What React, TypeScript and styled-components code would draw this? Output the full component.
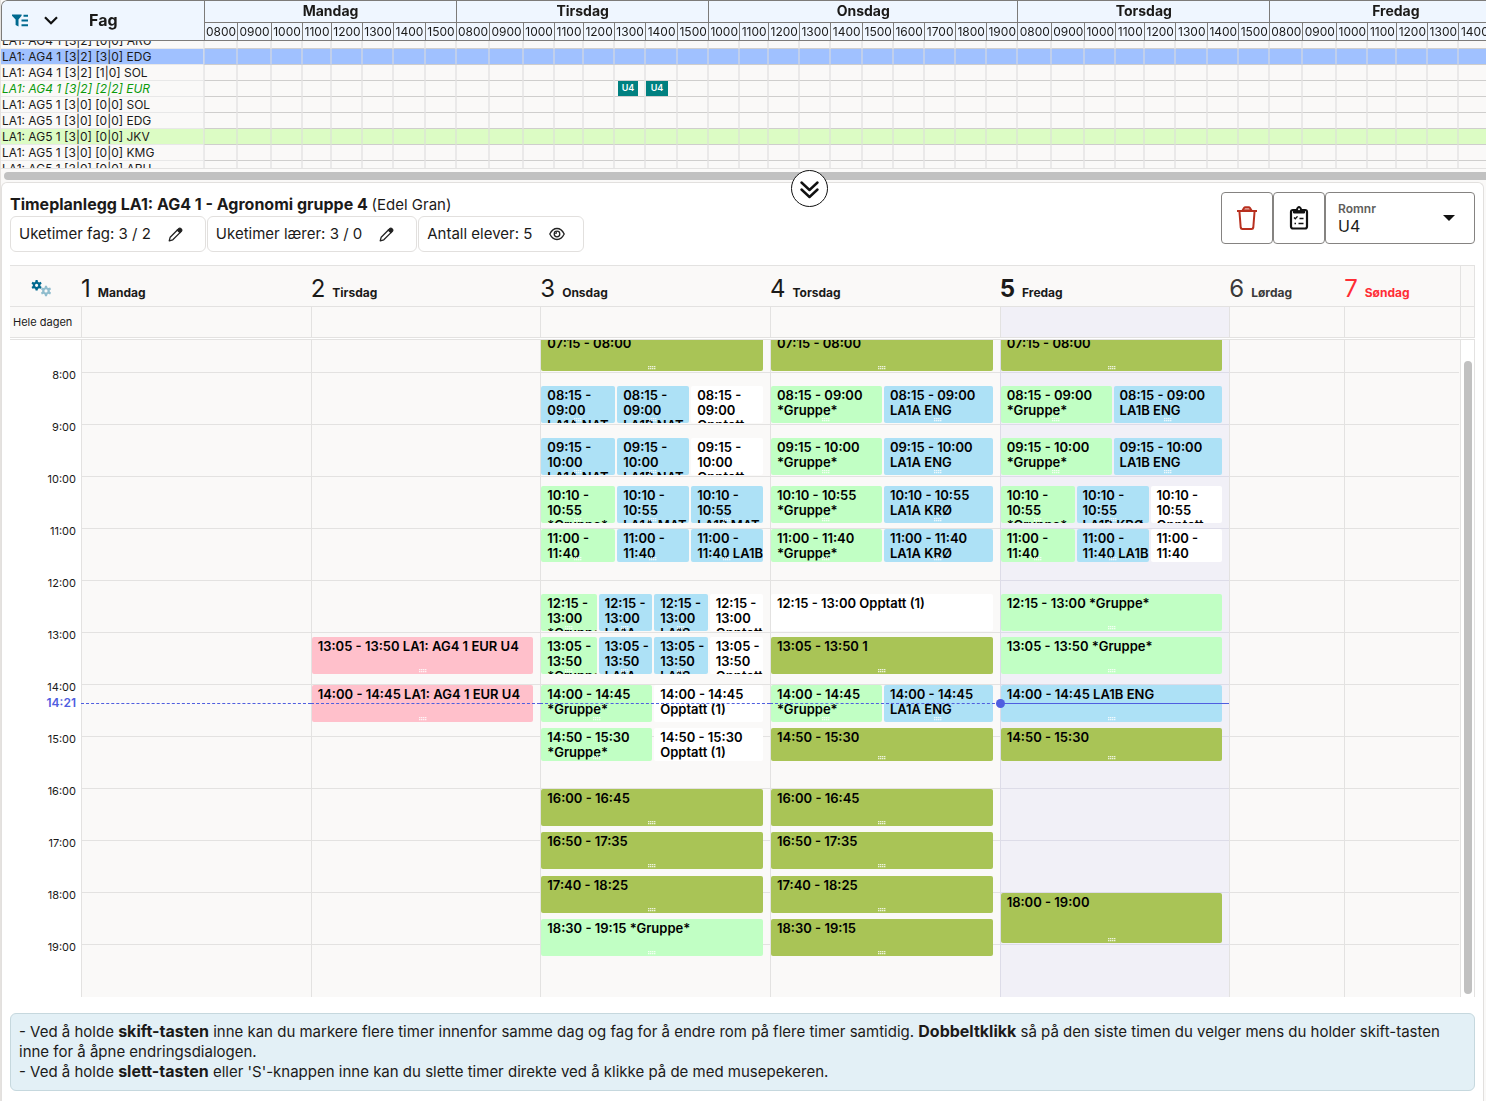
import React, { useLayoutEffect, useRef } from "react";
import styled, { createGlobalStyle, css } from "styled-components";

const GlobalStyle = createGlobalStyle`
  *, *::before, *::after { box-sizing: border-box; }
  html, body { height: 100%; }
  body {
    margin: 0;
    background: #faf9f8;
    color: #1b1a19;
    font-family: Inter, "Liberation Sans", sans-serif;
    font-size: 15px;
    line-height: 20px;
    overflow: hidden;
  }
  #root { min-height: 100%; display: flex; }
  button, select { font: inherit; color: inherit; }
`;

const line = "#e3e2e1";
const headLine = "#7d7b79";

const Page = styled.main`
  flex: 1;
  min-width: 0;
  display: flex;
  flex-direction: column;
  border-left: 1px solid #e5e2df;
`;

/* ---------- Overview table ---------- */

const OverviewScroller = styled.div`
  height: 169px;
  overflow: auto;
  scrollbar-width: none;
  border-bottom: 1px solid ${line};
  border-top-left-radius: 6px;
`;

const OverviewTable = styled.table`
  table-layout: fixed;
  width: 0;
  min-width: 100%;
  border-collapse: separate;
  border-spacing: 0;
  font-size: 12px;
  line-height: 15px;

  thead {
    position: sticky;
    top: 0;
    z-index: 1;
  }
`;

const SubjectHead = styled.th`
  height: 41px;
  padding: 0 10px;
  background: #eff6ff;
  border: 1px solid ${headLine};
  border-right: 0;
  border-top-left-radius: 6px;
  font-size: 16px;
`;

const SubjectHeadRow = styled.div`
  display: flex;
  align-items: center;
  gap: 16px;
  text-align: left;
`;

const SubjectTitle = styled.span`
  margin-left: 15px;
`;

const DayHead = styled.th`
  height: 22px;
  padding: 0;
  background: #eff6ff;
  border-top: 1px solid ${headLine};
  border-left: 1px solid ${headLine};
  font-size: 14px;
  line-height: 19px;
  vertical-align: top;
`;

const HourHead = styled.th`
  height: 19px;
  padding: 0;
  background: #eff6ff;
  border: 1px solid ${headLine};
  border-right: 0;
  font-weight: 400;
  line-height: 17px;
`;

type Tone = "plain" | "selected" | "marked" | "own";

const toneBackground: Record<Tone, string> = {
  plain: "#faf9f8",
  own: "#faf9f8",
  selected: "#a0c1ff",
  marked: "#dcfcc4",
};

const SubjectRow = styled.tr<{ $tone: Tone }>`
  background: ${(p) => toneBackground[p.$tone]};
  ${(p) =>
    p.$tone === "own" &&
    css`
      color: #0b9a0b;
      font-style: italic;
    `}
`;

const SubjectCell = styled.th`
  height: 16px;
  padding: 0 0 0 1px;
  border-right: 1px solid #e4e4e4aa;
  border-bottom: 1px solid #e8e8e8;
  font-weight: 400;
  text-align: left;
  white-space: nowrap;
`;

const SlotCell = styled.td`
  height: 16px;
  padding: 0;
  border: 0 solid #dcdcdc88;
  border-width: 0 1px 1px;
  border-bottom-color: #cfcecd;
`;

const Booking = styled.span<{ $width: number; $inset: number }>`
  display: block;
  width: ${(p) => p.$width}px;
  height: 15px;
  margin-left: ${(p) => p.$inset}px;
  background: #008080;
  color: #fff;
  font-size: 9px;
  font-style: normal;
  font-weight: 600;
  line-height: 14px;
  text-align: center;
`;

const ScrollTrack = styled.div`
  padding: 3px 0 2px 3px;
`;

const ScrollThumb = styled.div`
  height: 8px;
  border-radius: 4px 0 0 4px;
  background: #c1c1c1;
`;

/* ---------- Planner panel ---------- */

const Panel = styled.section`
  position: relative;
  flex: 1;
  margin: 0 2px 0 0;
  padding: 9px 8px 10px;
  background: #fff;
  border: 1px solid #e2e0de;
  border-bottom: 0;
  border-radius: 6px 6px 0 0;
`;

const CollapseButton = styled.button`
  position: absolute;
  top: -13px;
  left: calc(50% + 48px);
  width: 37px;
  height: 37px;
  display: grid;
  place-items: center;
  padding: 0;
  border: 1px solid #111;
  border-radius: 50%;
  background: #fff;
`;

const PanelTop = styled.header`
  display: flex;
  justify-content: space-between;
  align-items: flex-start;
`;

const Title = styled.h1`
  margin: 2px 0 1px;
  font-size: 16px;
  line-height: 21px;

  span {
    font-size: 15px;
    font-weight: 400;
  }
`;

const Chips = styled.div`
  display: flex;
  gap: 1px;
`;

const Chip = styled.div`
  display: flex;
  align-items: center;
  gap: 17px;
  height: 36px;
  padding: 0 18px 0 8px;
  border: 1px solid #e2e0de;
  border-radius: 6px;
`;

const IconButton = styled.button`
  display: grid;
  place-items: center;
  padding: 0;
  border: 0;
  background: none;
`;

const Actions = styled.div`
  display: flex;
`;

const ActionButton = styled.button`
  display: grid;
  place-items: center;
  width: 52px;
  height: 52px;
  padding: 0;
  border: 1px solid #858381;
  border-radius: 4px;
  background: #fff;
`;

const RoomField = styled.div`
  display: flex;
  align-items: center;
  width: 150px;
  height: 52px;
  padding: 0 19px 0 12px;
  border: 1px solid #858381;
  border-radius: 4px;
`;

const RoomStack = styled.div`
  flex: 1;
  display: flex;
  flex-direction: column;
`;

const RoomLabel = styled.label`
  color: #605e5c;
  font-size: 12px;
  font-weight: 600;
  line-height: 16px;
`;

const RoomSelect = styled.select`
  appearance: none;
  padding: 0;
  border: 0;
  background: none;
  font-size: 16px;
  line-height: 18px;
`;

/* ---------- Week calendar ---------- */

const Calendar = styled.div`
  margin-top: 13px;
`;

const CalendarBand = styled.div<{ $height: number }>`
  display: grid;
  grid-template-columns: 71px minmax(0, 1fr) 15px;
  height: ${(p) => p.$height}px;
  background: #faf9f8;
  border-bottom: 1px solid ${line};
`;

const HeadBand = styled(CalendarBand)`
  border-top: 1px solid ${line};
`;

const DayGrid = styled.div`
  display: grid;
  grid-template-columns: repeat(5, minmax(0, 2fr)) repeat(2, minmax(0, 1fr));
  padding-right: 1px;
`;

const Corner = styled.div`
  display: grid;
  place-items: center;
  padding: 4px 8px 0 0;
`;

const Gutter = styled.div`
  border: 0 solid ${line};
  border-width: 0 1px;
`;

const DayName = styled.div<{ $color?: string; $today?: boolean }>`
  display: flex;
  align-items: baseline;
  gap: 7px;
  padding-top: 9px;
  color: ${(p) => p.$color ?? "inherit"};
  font-size: 12px;
  font-weight: 700;
  line-height: 28px;

  span {
    font-size: 24px;
    font-weight: ${(p) => (p.$today ? 700 : 400)};
  }
`;

const AllDayLabel = styled.div`
  padding-left: 3px;
  font-size: 11px;
  line-height: 30px;
`;

const AllDayCell = styled.div<{ $today?: boolean }>`
  border-left: 1px solid ${line};
  background: ${(p) => (p.$today ? "#f1f0f7" : "transparent")};
`;

const Body = styled.div`
  display: flex;
  margin-top: 1px;
  border-top: 1px solid ${line};
`;

const Viewport = styled.div`
  flex: 1;
  display: grid;
  grid-template-columns: 71px minmax(0, 1fr);
  height: 657px;
  overflow: auto;
  scrollbar-width: none;
`;

const TimeColumn = styled.div`
  position: relative;
  height: 676px;
  padding: 47px 5px 0 0;
  font-size: 11px;
  line-height: 14px;
  text-align: right;
`;

const HourLabel = styled.div`
  height: 52px;
`;

const NowLabel = styled.div`
  position: absolute;
  top: 375px;
  right: 5px;
  color: #4f5ee0;
  font-size: 12px;
  font-weight: 600;
`;

const HourDays = styled(DayGrid)`
  grid-template-rows: 676px;
  background: #faf9f8;
`;

const DayColumn = styled.div<{ $today?: boolean }>`
  position: relative;
  height: 676px;
  display: grid;
  grid-template-columns: repeat(12, minmax(0, 1fr));
  grid-template-rows: repeat(156, minmax(0, 1fr));
  padding-right: 3%;
  border-left: 1px solid ${(p) => (p.$today ? "#dddce8" : line)};
  background-color: ${(p) => (p.$today ? "#f1f0f7" : "#faf9f8")};
  background-image: repeating-linear-gradient(
    to bottom,
    transparent 0 51px,
    ${(p) => (p.$today ? "#dddce8" : line)} 51px 52px
  );
  background-size: 100% 675px;
  background-repeat: no-repeat;
`;

type Kind = "olive" | "green" | "blue" | "white" | "pink";

const kindBackground: Record<Kind, string> = {
  olive: "#a9c456",
  green: "#c1ffc4",
  blue: "#ade1f6",
  white: "#ffffff",
  pink: "#ffc0cb",
};

const EventCard = styled.article<{
  $kind: Kind;
  $from: number;
  $to: number;
  $index: number;
  $of: number;
}>`
  position: relative;
  grid-row: ${(p) => p.$from} / ${(p) => p.$to};
  grid-column: ${(p) => (p.$index * 12) / p.$of + 1} / span ${(p) => 12 / p.$of};
  margin: 0 0 2px ${(p) => (p.$index > 0 ? 2 : 0)}px;
  padding: 2px 2px 0 6px;
  overflow: hidden;
  border-radius: 2px;
  background: ${(p) => kindBackground[p.$kind]};
  color: #000;
  font-size: 13px;
  font-weight: 600;
  line-height: 15px;
`;

const Grip = styled.i`
  position: absolute;
  bottom: 1px;
  left: calc(50% - 4px);
  width: 8px;
  height: 4px;
  background: repeating-linear-gradient(to right, #ffffffcc 0 1px, #ffffff55 1px 2px);
  mask: repeating-linear-gradient(to bottom, #000 0 1px, #0004 1px 2px);
`;

const NowLine = styled.div<{ $today: boolean }>`
  position: absolute;
  z-index: 1;
  top: 382px;
  right: 0;
  left: -1px;
  border-top: 1px ${(p) => (p.$today ? "solid" : "dashed")} #4f5ee0;

  &::before {
    content: "";
    display: ${(p) => (p.$today ? "block" : "none")};
    width: 9px;
    height: 9px;
    margin: -5px 0 0 -4px;
    border-radius: 50%;
    background: #4f5ee0;
  }
`;

const ThumbColumn = styled.div`
  width: 15px;
  padding: 21px 2px 3px 3px;
  border: 0 solid ${line};
  border-width: 0 1px;
  display: flex;
`;

const Thumb = styled.div`
  flex: 1;
  border-radius: 4px;
  background: #c1c1c1;
`;

const Hint = styled.p`
  margin: 16px 0 0;
  padding: 8px;
  border: 1px solid #c6d8de;
  border-radius: 6px;
  background: #e3f0f6;

  b {
    font-size: 16px;
    line-height: 16px;
  }
`;

/* ---------- Icons ---------- */

const FilterIcon = () => (
  <svg width="16" height="13" viewBox="0 0 16 13" fill="#00698f">
    <path d="M0 .5h9.6v1.2L6.5 5.6v6.9L3.6 11V5.6L0 1.700z" />
    <path d="M11.500 .8H16v2h-4.500zM9.500 5.500H16v2H9.500zM9.500 10.200H16v2H9.500z" />
  </svg>
);

const ChevronIcon = () => (
  <svg width="14" height="9" viewBox="0 0 14 9" fill="none" stroke="#111" strokeWidth="2.200">
    <path d="M1 1.200l6 6 6-6" />
  </svg>
);

const DoubleChevronIcon = () => (
  <svg width="20" height="20" viewBox="0 0 20 20" fill="none" stroke="#111" strokeWidth="2.400" strokeLinecap="round" strokeLinejoin="round">
    <path d="M2.500 3.500l8 7.500 8-7.500M2.500 10.500l8 7.500 8-7.500" />
  </svg>
);

const PencilIcon = () => (
  <svg width="19" height="15" viewBox="0 0 19 15" fill="none" stroke="#222" strokeWidth="1.300" strokeLinejoin="round">
    <path d="M1.200 13.800l1-3.600 7.200-7.200 2.600 2.600-7.200 7.200z" />
    <path d="M9.400 3l1.400-1.400q1-.8 2 0l.6.6q.8 1 0 2L12 5.600z" fill="#222" />
  </svg>
);

const EyeIcon = () => (
  <svg width="16" height="14" viewBox="0 0 16 14" fill="none" stroke="#222" strokeWidth="1.300">
    <path d="M.8 7Q3.500 1.500 8 1.500T15.200 7Q12.500 12.500 8 12.500T.8 7z" />
    <circle cx="8" cy="7" r="2.800" />
    <path d="M8 5.700q-1.200.1-1.300 1.300" />
  </svg>
);

const TrashIcon = () => (
  <svg width="22" height="26" viewBox="0 0 22 26" fill="none" stroke="#b8301f" strokeWidth="2">
    <path d="M1 6h20M3.400 6l1.300 16.500q.2 1.500 1.700 1.500h9.200q1.500 0 1.700-1.500L18.600 6" />
    <path d="M6.500 5.500l1.500-2.500q.5-.8 1.400-.8h3.200q.9 0 1.400.8l1.500 2.500z" fill="#e9b5ae" />
  </svg>
);

const ClipboardIcon = () => (
  <svg width="20" height="26" viewBox="0 0 20 26" fill="none" stroke="#111" strokeWidth="2.200">
    <rect x="2" y="5" width="16" height="18.500" rx="2" />
    <path d="M4.500 8V4.500H7.500q.3-3 2.500-3t2.500 3H15.500V8z" fill="#111" strokeWidth="1" />
    <circle cx="10" cy="4.300" r="1" fill="#fff" stroke="none" />
    <path d="M5 12.500l1.300 1.300 2.200-2.400M10.500 13.500h4M5.500 18.500H7M9.500 18.500h5" strokeWidth="1.400" />
  </svg>
);

const gear = "M8.500 1h3l.5 2.600 1.700 1 2.500-.9 1.500 2.600-2 1.700v2l2 1.700-1.500 2.600-2.500-.9-1.700 1-.5 2.600h-3L8 14.400l-1.700-1-2.500.9-1.500-2.600 2-1.700V8l-2-1.700 1.500-2.600 2.500.9 1.700-1zM10 6.600a2.400 2.400 0 100 4.800 2.400 2.400 0 000-4.800z";

const GearsIcon = () => (
  <svg width="21" height="17" viewBox="0 0 21 17">
    <path d={gear} fill="#00698f" fillRule="evenodd" transform="translate(-1 -.6) scale(.66)" />
    <path d={gear} fill="#8fbccd" fillRule="evenodd" transform="translate(8.400 5) scale(.66)" />
  </svg>
);

const CaretIcon = () => (
  <svg width="12" height="6" viewBox="0 0 12 6" fill="#111">
    <path d="M0 0h12L6 6z" />
  </svg>
);

/* ---------- Data ---------- */

const hourRange = (from: number, to: number) =>
  Array.from({ length: to - from + 1 }, (_, i) => String(from + i).padStart(2, "0") + "00");

const overviewDays = [
  { name: "Mandag", hours: hourRange(8, 15), widths: [33, 34, 31, 29, 31, 31, 32, 31] },
  { name: "Tirsdag", hours: hourRange(8, 15), widths: [33, 34, 31, 29, 31, 31, 32, 31] },
  { name: "Onsdag", hours: hourRange(10, 19), widths: [31, 29, 31, 31, 32, 31, 31, 31, 31, 31] },
  { name: "Torsdag", hours: hourRange(8, 15), widths: [34, 33, 31, 29, 31, 32, 31, 31] },
  { name: "Fredag", hours: hourRange(8, 15), widths: [33, 34, 31, 29, 31, 31, 32, 31] },
];

const subjects: { name: string; tone: Tone; bookings?: Record<string, [number, number]> }[] = [
  { name: "LA1: AG4 1 [3|2] [0|0] ARU", tone: "plain" },
  { name: "LA1: AG4 1 [3|2] [3|0] EDG", tone: "selected" },
  { name: "LA1: AG4 1 [3|2] [1|0] SOL", tone: "plain" },
  { name: "LA1: AG4 1 [3|2] [2|2] EUR", tone: "own", bookings: { "Tirsdag1300": [3, 20], "Tirsdag1400": [0, 22] } },
  { name: "LA1: AG5 1 [3|0] [0|0] SOL", tone: "plain" },
  { name: "LA1: AG5 1 [3|0] [0|0] EDG", tone: "plain" },
  { name: "LA1: AG5 1 [3|0] [0|0] JKV", tone: "marked" },
  { name: "LA1: AG5 1 [3|0] [0|0] KMG", tone: "plain" },
  { name: "LA1: AG5 1 [3|0] [0|0] ARU", tone: "plain" },
];

type Lesson = [time: string, ...items: [Kind, string][]];

const G = "*Gruppe*";
const O = "Opptatt (1)";

const week: { name: string; color?: string; lessons: Lesson[] }[] = [
  { name: "Mandag", lessons: [] },
  {
    name: "Tirsdag",
    lessons: [
      ["13:05 - 13:50", ["pink", "LA1: AG4 1 EUR U4"]],
      ["14:00 - 14:45", ["pink", "LA1: AG4 1 EUR U4"]],
    ],
  },
  {
    name: "Onsdag",
    lessons: [
      ["07:15 - 08:00", ["olive", ""]],
      ["08:15 - 09:00", ["blue", "LA1A NAT"], ["blue", "LA1B NAT"], ["white", O]],
      ["09:15 - 10:00", ["blue", "LA1A NAT"], ["blue", "LA1B NAT"], ["white", O]],
      ["10:10 - 10:55", ["green", G], ["blue", "LA1A MAT"], ["blue", "LA1B MAT"]],
      ["11:00 - 11:40", ["green", G], ["blue", "LA1A MAT"], ["blue", "\u00a0LA1B MAT"]],
      ["12:15 - 13:00", ["green", G], ["blue", "LA1A NOR"], ["blue", "LA1B NOR"], ["white", O]],
      ["13:05 - 13:50", ["green", G], ["blue", "LA1A NOR"], ["blue", "LA1B NOR"], ["white", O]],
      ["14:00 - 14:45", ["green", G], ["white", O]],
      ["14:50 - 15:30", ["green", G], ["white", O]],
      ["16:00 - 16:45", ["olive", ""]],
      ["16:50 - 17:35", ["olive", ""]],
      ["17:40 - 18:25", ["olive", ""]],
      ["18:30 - 19:15", ["green", G]],
    ],
  },
  {
    name: "Torsdag",
    lessons: [
      ["07:15 - 08:00", ["olive", ""]],
      ["08:15 - 09:00", ["green", G], ["blue", "LA1A ENG"]],
      ["09:15 - 10:00", ["green", G], ["blue", "LA1A ENG"]],
      ["10:10 - 10:55", ["green", G], ["blue", "LA1A KRØ"]],
      ["11:00 - 11:40", ["green", G], ["blue", "LA1A KRØ"]],
      ["12:15 - 13:00", ["white", O]],
      ["13:05 - 13:50", ["olive", "1"]],
      ["14:00 - 14:45", ["green", G], ["blue", "LA1A ENG"]],
      ["14:50 - 15:30", ["olive", ""]],
      ["16:00 - 16:45", ["olive", ""]],
      ["16:50 - 17:35", ["olive", ""]],
      ["17:40 - 18:25", ["olive", ""]],
      ["18:30 - 19:15", ["olive", ""]],
    ],
  },
  {
    name: "Fredag",
    lessons: [
      ["07:15 - 08:00", ["olive", ""]],
      ["08:15 - 09:00", ["green", G], ["blue", "LA1B ENG"]],
      ["09:15 - 10:00", ["green", G], ["blue", "LA1B ENG"]],
      ["10:10 - 10:55", ["green", G], ["blue", "LA1B KRØ"], ["white", O]],
      ["11:00 - 11:40", ["green", G], ["blue", "\u00a0LA1B KRØ"], ["white", O]],
      ["12:15 - 13:00", ["green", G]],
      ["13:05 - 13:50", ["green", G]],
      ["14:00 - 14:45", ["blue", "LA1B ENG"]],
      ["14:50 - 15:30", ["olive", ""]],
      ["18:00 - 19:00", ["olive", ""]],
    ],
  },
  { name: "Lørdag", color: "#3b3a39", lessons: [] },
  { name: "Søndag", color: "#ff2d35", lessons: [] },
];

const today = 4;

/** Grid line of a clock time: the day starts at 07:00 and has one row for every five minutes. */
const gridLine = (clock: string) => {
  const [h, m] = clock.split(":").map(Number);
  return ((h - 7) * 60 + m) / 5 + 1;
};

/** Joins time and subject; a subject that opens with a hard space stays on the line of the end time. */
const eventText = (time: string, text: string) => (text.startsWith("\u00a0") ? time + text : `${time} ${text}`);

/* ---------- Components ---------- */

const Overview = () => {
  const scroller = useRef<HTMLDivElement>(null);
  useLayoutEffect(() => {
    if (scroller.current) scroller.current.scrollTop = 8;
  }, []);

  return (
    <OverviewScroller ref={scroller}>
      <OverviewTable>
        <colgroup>
          <col style={{ width: 203 }} />
          {overviewDays.flatMap((d) => d.widths.map((w, i) => <col key={d.name + i} style={{ width: w }} />))}
        </colgroup>
        <thead>
          <tr>
            <SubjectHead rowSpan={2} scope="col">
              <SubjectHeadRow>
                <IconButton aria-label="Filter"><FilterIcon /></IconButton>
                <IconButton aria-label="Vis mer"><ChevronIcon /></IconButton>
                <SubjectTitle>Fag</SubjectTitle>
              </SubjectHeadRow>
            </SubjectHead>
            {overviewDays.map((d) => (
              <DayHead key={d.name} colSpan={d.hours.length} scope="colgroup">{d.name}</DayHead>
            ))}
          </tr>
          <tr>
            {overviewDays.flatMap((d) => d.hours.map((h) => <HourHead key={d.name + h} scope="col">{h}</HourHead>))}
          </tr>
        </thead>
        <tbody>
          {subjects.map((s) => (
            <SubjectRow key={s.name} $tone={s.tone}>
              <SubjectCell scope="row">{s.name}</SubjectCell>
              {overviewDays.flatMap((d) =>
                d.hours.map((h) => {
                  const booking = s.bookings?.[d.name + h];
                  return (
                    <SlotCell key={d.name + h}>
                      {booking && <Booking $inset={booking[0]} $width={booking[1]}>U4</Booking>}
                    </SlotCell>
                  );
                })
              )}
            </SubjectRow>
          ))}
        </tbody>
      </OverviewTable>
    </OverviewScroller>
  );
};

const WeekCalendar = () => {
  const viewport = useRef<HTMLDivElement>(null);
  useLayoutEffect(() => {
    if (viewport.current) viewport.current.scrollTop = viewport.current.scrollHeight;
  }, []);

  return (
    <Calendar>
      <HeadBand $height={42}>
        <Corner><IconButton aria-label="Innstillinger"><GearsIcon /></IconButton></Corner>
        <DayGrid>
          {week.map((d, i) => (
            <DayName key={d.name} $color={d.color} $today={i === today}><span>{i + 1}</span>{d.name}</DayName>
          ))}
        </DayGrid>
        <Gutter />
      </HeadBand>
      <CalendarBand $height={31}>
        <AllDayLabel>Hele dagen</AllDayLabel>
        <DayGrid>
          {week.map((d, i) => <AllDayCell key={d.name} $today={i === today} />)}
        </DayGrid>
        <Gutter />
      </CalendarBand>
      <Body>
        <Viewport ref={viewport}>
          <TimeColumn>
            {Array.from({ length: 12 }, (_, i) => <HourLabel key={i}>{i + 8}:00</HourLabel>)}
            <NowLabel>14:21</NowLabel>
          </TimeColumn>
          <HourDays>
            {week.map((d, day) => (
              <DayColumn key={d.name} $today={day === today}>
                {d.lessons.flatMap(([time, ...items]) => {
                  const [from, to] = time.split(" - ");
                  return items.map(([kind, text], i) => (
                    <EventCard key={time + i} $kind={kind} $from={gridLine(from)} $to={gridLine(to)} $index={i} $of={items.length}>
                      {eventText(time, text)}
                      {kind !== "white" && <Grip />}
                    </EventCard>
                  ));
                })}
                {day <= today && <NowLine $today={day === today} />}
              </DayColumn>
            ))}
          </HourDays>
        </Viewport>
        <ThumbColumn><Thumb /></ThumbColumn>
      </Body>
    </Calendar>
  );
};

export default function App() {
  return (
    <>
      <GlobalStyle />
      <Page>
        <Overview />
        <ScrollTrack><ScrollThumb /></ScrollTrack>
        <Panel>
          <CollapseButton aria-label="Skjul"><DoubleChevronIcon /></CollapseButton>
          <PanelTop>
            <div>
              <Title>Timeplanlegg LA1: AG4 1 - Agronomi gruppe 4 <span>(Edel Gran)</span></Title>
              <Chips>
                <Chip>Uketimer fag: 3 / 2 <IconButton aria-label="Rediger fag"><PencilIcon /></IconButton></Chip>
                <Chip>Uketimer lærer: 3 / 0 <IconButton aria-label="Rediger lærer"><PencilIcon /></IconButton></Chip>
                <Chip>Antall elever: 5 <IconButton aria-label="Vis elever"><EyeIcon /></IconButton></Chip>
              </Chips>
            </div>
            <Actions>
              <ActionButton aria-label="Slett"><TrashIcon /></ActionButton>
              <ActionButton aria-label="Oppgaver"><ClipboardIcon /></ActionButton>
              <RoomField>
                <RoomStack>
                  <RoomLabel htmlFor="room">Romnr</RoomLabel>
                  <RoomSelect id="room" defaultValue="U4"><option>U4</option></RoomSelect>
                </RoomStack>
                <CaretIcon />
              </RoomField>
            </Actions>
          </PanelTop>
          <WeekCalendar />
          <Hint>
            - Ved å holde <b>skift-tasten</b> inne kan du markere flere timer innenfor samme dag og fag for å endre rom på flere timer samtidig. <b>Dobbeltklikk</b> så på den siste timen du velger mens du holder skift-tasten inne for å åpne endringsdialogen.
            <br />
            - Ved å holde <b>slett-tasten</b> eller 'S'-knappen inne kan du slette timer direkte ved å klikke på de med musepekeren.
          </Hint>
        </Panel>
      </Page>
    </>
  );
}
